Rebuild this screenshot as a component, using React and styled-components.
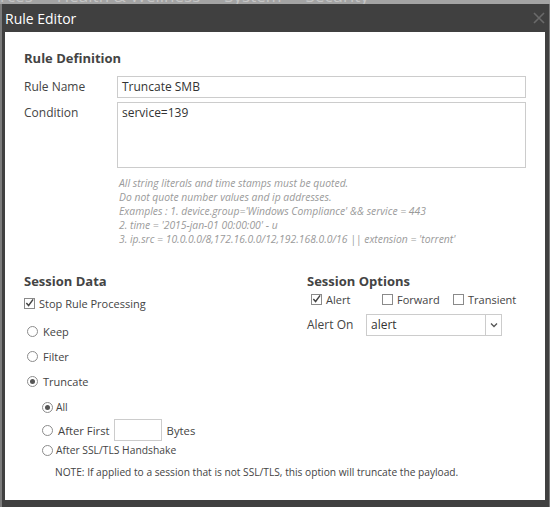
import React from "react";
import styled, { createGlobalStyle } from "styled-components";

const Global = createGlobalStyle`
  html, body {
    margin: 0;
    padding: 0;
    background: #7b7b7b;
    font-family: "Open Sans", "Noto Sans", sans-serif;
    color: #444;
  }
`;

const Page = styled.div`
  width: 550px;
  height: 507px;
  display: flex;
  flex-direction: column;
  overflow: hidden;
`;

const BackNav = styled.div`
  height: 4px;
  background: #a4a4a4;
  overflow: hidden;
  display: flex;
  gap: 24px;
  font-size: 17px;
  line-height: 17px;
  color: #c6c6c6;
  span {
    margin-top: -13px;
    white-space: nowrap;
  }
`;

const Dialog = styled.div`
  flex: 1;
  margin: 0 1px 0 2px;
  background: #404040;
  padding: 0 4px 7px 3px;
  display: flex;
  flex-direction: column;
`;

const TitleBar = styled.div`
  height: 28px;
  display: flex;
  align-items: center;
  justify-content: space-between;
  color: #fff;
  font-size: 14px;
`;

const Close = styled.span`
  width: 12px;
  height: 12px;
  display: flex;
`;

const Body = styled.div`
  flex: 1;
  background: #fff;
  padding: 17px 19px 0 19px;
  font-size: 12px;
`;

const Heading = styled.div`
  font-weight: 700;
  font-size: 13px;
  line-height: 18px;
  color: #444;
`;

const FormRow = styled.div`
  display: flex;
  align-items: flex-start;
  margin-top: ${(p) => p.$top}px;
`;

const Label = styled.div`
  width: ${(p) => p.$w || 93}px;
  line-height: 22px;
  flex-shrink: 0;
`;

const TextBox = styled.div`
  width: 409px;
  height: ${(p) => p.$h}px;
  box-sizing: border-box;
  border: 1px solid #ccc;
  padding: 0 4px;
  line-height: ${(p) => (p.$h > 30 ? 20 : p.$h - 2)}px;
  color: #333;
`;

const Hints = styled.div`
  margin: 8px 0 0 95px;
  font-size: 10.35px;
  font-style: italic;
  line-height: 14px;
  color: #9a9a9a;
`;

const Columns = styled.div`
  display: grid;
  grid-template-columns: 283px 1fr;
  margin-top: 26px;
`;

const Column = styled.div`
  display: flex;
  flex-direction: column;
`;

const CheckRow = styled.div`
  display: flex;
  align-items: center;
  gap: ${(p) => p.$gap || 4}px;
  height: ${(p) => p.$h || 18}px;
  margin-left: ${(p) => p.$indent || 0}px;
  margin-top: ${(p) => p.$top || 0}px;
  font-size: ${(p) => p.$size || 11}px;
  white-space: nowrap;
`;

const Box = styled.span`
  width: 11px;
  height: 11px;
  box-sizing: border-box;
  border: 1px solid #8a8a8a;
  display: flex;
  align-items: center;
  justify-content: center;
  flex-shrink: 0;
`;

const Radio = styled.span`
  width: 11px;
  height: 11px;
  box-sizing: border-box;
  border-radius: 50%;
  border: 1px solid #8c8c8c;
  display: flex;
  align-items: center;
  justify-content: center;
  flex-shrink: 0;
  &::after {
    content: "";
    width: 5px;
    height: 5px;
    border-radius: 50%;
    background: ${(p) => (p.$on ? "#555" : "transparent")};
  }
`;

const OptRow = styled.div`
  display: flex;
  align-items: center;
  height: 18px;
  margin-left: 4px;
  font-size: 11px;
`;

const Opt = styled.div`
  display: flex;
  align-items: center;
  gap: 4px;
  width: ${(p) => p.$w}px;
`;

const AlertRow = styled.div`
  display: flex;
  align-items: center;
  margin-top: 6px;
`;

const Select = styled.div`
  width: 136px;
  height: 22px;
  box-sizing: border-box;
  border: 1px solid #ccc;
  display: flex;
  color: #333;
  span {
    flex: 1;
    padding-left: 4px;
    line-height: 20px;
  }
`;

const Arrow = styled.div`
  width: 15px;
  border-left: 1px solid #ccc;
  display: flex;
  align-items: center;
  justify-content: center;
`;

const SmallInput = styled.span`
  width: 48px;
  height: 22px;
  box-sizing: border-box;
  border: 1px solid #ccc;
  margin: 0 0 0 -1px;
`;

const Note = styled.div`
  margin: 5px 0 0 31px;
  font-size: 10.2px;
  line-height: 16px;
`;

const Check = () => (
  <Box>
    <svg width="10" height="10" viewBox="0 0 10 10">
      <path d="M1.5 5 L4 7.8 L9 1" fill="none" stroke="#444" strokeWidth="1.6" />
    </svg>
  </Box>
);

export default function App() {
  return (
    <Page>
      <Global />
      <BackNav>
        <span>rces</span>
        <span>Health &amp; Wellness</span>
        <span>System</span>
        <span>Security</span>
      </BackNav>
      <Dialog>
        <TitleBar>
          <span>Rule Editor</span>
          <Close>
            <svg width="12" height="12" viewBox="0 0 12 12">
              <path d="M1 1 L11 11 M11 1 L1 11" stroke="#6a6a6a" strokeWidth="1.6" />
            </svg>
          </Close>
        </TitleBar>
        <Body>
          <Heading>Rule Definition</Heading>
          <FormRow $top={9}>
            <Label>Rule Name</Label>
            <TextBox $h={22}>Truncate SMB</TextBox>
          </FormRow>
          <FormRow $top={4}>
            <Label>Condition</Label>
            <TextBox $h={66}>service=139</TextBox>
          </FormRow>
          <Hints>
            <div>All string literals and time stamps must be quoted.</div>
            <div>Do not quote number values and ip addresses.</div>
            <div>Examples : 1. device.group='Windows Compliance' &amp;&amp; service = 443</div>
            <div>2. time = '2015-jan-01 00:00:00' - u</div>
            <div>3. ip.src = 10.0.0.0/8,172.16.0.0/12,192.168.0.0/16 || extension = 'torrent'</div>
          </Hints>
          <Columns>
            <Column>
              <Heading>Session Data</Heading>
              <CheckRow $top={4}>
                <Check />
                Stop Rule Processing
              </CheckRow>
              <CheckRow $indent={3} $top={10} $gap={5}>
                <Radio />
                Keep
              </CheckRow>
              <CheckRow $indent={3} $top={7} $gap={5}>
                <Radio />
                Filter
              </CheckRow>
              <CheckRow $indent={3} $top={7} $gap={5}>
                <Radio $on />
                Truncate
              </CheckRow>
              <CheckRow $indent={18} $top={8} $gap={3} $size={10.3}>
                <Radio $on />
                All
              </CheckRow>
              <CheckRow $indent={18} $top={3} $h={22} $gap={5} $size={11.3}>
                <Radio />
                After First
                <SmallInput />
                Bytes
              </CheckRow>
              <CheckRow $indent={18} $top={0} $gap={3} $size={10.3}>
                <Radio />
                After SSL/TLS Handshake
              </CheckRow>
            </Column>
            <Column>
              <Heading>Session Options</Heading>
              <OptRow>
                <Opt $w={71}>
                  <Check />
                  Alert
                </Opt>
                <Opt $w={71}>
                  <Box />
                  Forward
                </Opt>
                <Opt $w={80}>
                  <Box />
                  Transient
                </Opt>
              </OptRow>
              <AlertRow>
                <Label $w={59}>Alert On</Label>
                <Select>
                  <span>alert</span>
                  <Arrow>
                    <svg width="8" height="6" viewBox="0 0 8 6">
                      <path d="M1 1.5 L4 4.5 L7 1.5" fill="none" stroke="#555" strokeWidth="1.3" />
                    </svg>
                  </Arrow>
                </Select>
              </AlertRow>
            </Column>
          </Columns>
          <Note>NOTE: If applied to a session that is not SSL/TLS, this option will truncate the payload.</Note>
        </Body>
      </Dialog>
    </Page>
  );
}
